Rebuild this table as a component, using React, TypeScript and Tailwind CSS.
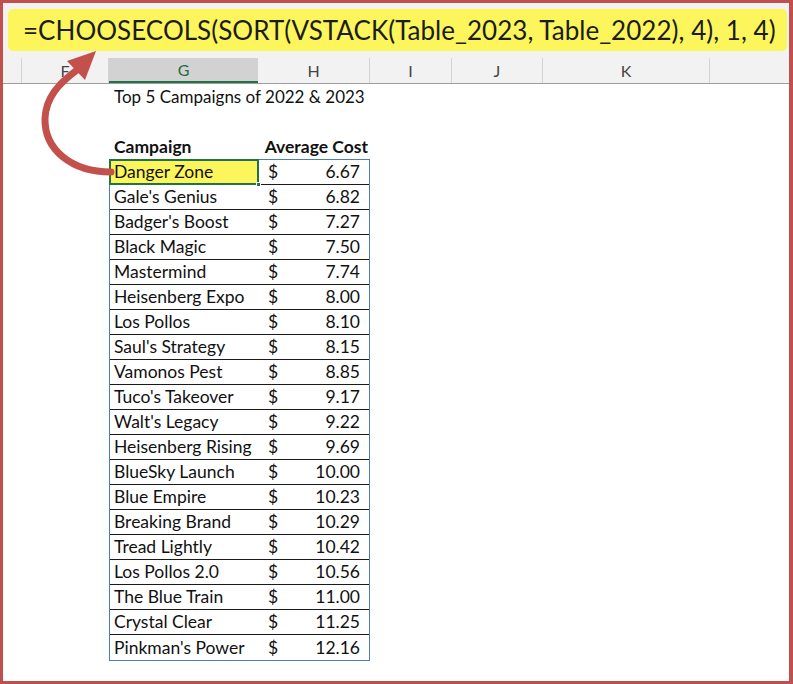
import React from "react";

const rows: [string, string][] = [
  ["Danger Zone", "6.67"],
  ["Gale's Genius", "6.82"],
  ["Badger's Boost", "7.27"],
  ["Black Magic", "7.50"],
  ["Mastermind", "7.74"],
  ["Heisenberg Expo", "8.00"],
  ["Los Pollos", "8.10"],
  ["Saul's Strategy", "8.15"],
  ["Vamonos Pest", "8.85"],
  ["Tuco's Takeover", "9.17"],
  ["Walt's Legacy", "9.22"],
  ["Heisenberg Rising", "9.69"],
  ["BlueSky Launch", "10.00"],
  ["Blue Empire", "10.23"],
  ["Breaking Brand", "10.29"],
  ["Tread Lightly", "10.42"],
  ["Los Pollos 2.0", "10.56"],
  ["The Blue Train", "11.00"],
  ["Crystal Clear", "11.25"],
  ["Pinkman's Power", "12.16"],
];

const font = { fontFamily: "Lato, 'Open Sans', sans-serif" };

export default function App() {
  return (
    <div
      className="relative w-[793px] h-[684px] bg-white border-l-[3px] border-t-[3px] border-r-[4px] border-b-[3px] border-[#c0504d] flex flex-col overflow-hidden"
      style={font}
    >
      {/* formula bar area */}
      <div className="bg-[#f2f2f2] pt-[6px] pl-[5px] pr-[2px] pb-[7px]">
        <div className="h-[42px] rounded-[5px] bg-[#fcf65c] flex items-center pl-[15px] text-[26px] tracking-[0.03px] text-[#1c1c1c] whitespace-nowrap">
          =CHOOSECOLS(SORT(VSTACK(Table_2023, Table_2022), 4), 1, 4)
        </div>
      </div>
      {/* column headers */}
      <div className="h-[26px] flex bg-[#f2f2f2] border-b border-[#9e9e9e] text-[16px] text-[#444]">
        <div className="w-[19px] border-r border-[#d4d4d4]" />
        <div className="w-[87px] border-r border-[#d4d4d4] flex items-center justify-center">F</div>
        <div className="w-[149px] bg-[#d2d2d2] border-b-2 border-[#217346] flex items-center justify-center text-[#1e6b45]">G</div>
        <div className="w-[112px] border-r border-[#d4d4d4] flex items-center justify-center">H</div>
        <div className="w-[82px] border-r border-[#d4d4d4] flex items-center justify-center">I</div>
        <div className="w-[91px] border-r border-[#d4d4d4] flex items-center justify-center">J</div>
        <div className="w-[167px] border-r border-[#d4d4d4] flex items-center justify-center">K</div>
        <div className="flex-1" />
      </div>
      {/* sheet */}
      <div className="flex-1 pl-[106px] text-[17.5px] text-[#111]">
        <div className="h-[25px] flex items-center pl-[5px] text-[17px]">Top 5 Campaigns of 2022 &amp; 2023</div>
        <div className="h-[25px]" />
        <div className="h-[25px] flex items-center font-bold w-[261px] pt-px">
          <div className="w-[149px] pl-[5px]">Campaign</div>
          <div className="flex-1 text-right pr-[2px]">Average Cost</div>
        </div>
        <div className="w-[261px] border border-[#4a7dba]">
          {rows.map(([name, val], i) => (
            <div
              key={name}
              className={`flex h-[25px] pt-px ${i < rows.length - 1 ? "border-b border-[#1a1a1a]" : ""}`}
            >
              <div className={`relative w-[148px] flex items-center pl-[4px] ${i === 0 ? "bg-[#fcf65c]" : ""}`}>
                {name}
                {i === 0 && (
                  <>
                    <div className="absolute -left-px -top-[2px] -right-px -bottom-px border-2 border-[#217346]" />
                    <div className="absolute -right-[3px] -bottom-[3px] w-[5px] h-[5px] bg-[#217346] border border-white" />
                  </>
                )}
              </div>
              <div className="flex-1 flex items-center pl-[10px] pr-[9px] justify-between">
                <span>$</span>
                <span>{val}</span>
              </div>
            </div>
          ))}
        </div>
      </div>
      {/* arrow */}
      <svg
        className="absolute pointer-events-none"
        style={{ left: -3, top: -3 }}
        width={793}
        height={684}
        viewBox="0 0 793 684"
      >
        <path
          d="M111 172 C 72 172, 44 150, 45 118 C 46 98, 58 84, 77 70"
          fill="none"
          stroke="#c4504b"
          strokeWidth={7}
          strokeLinecap="round"
        />
        <polygon points="96,51 67,61 85,80" fill="#c4504b" />
      </svg>
    </div>
  );
}
